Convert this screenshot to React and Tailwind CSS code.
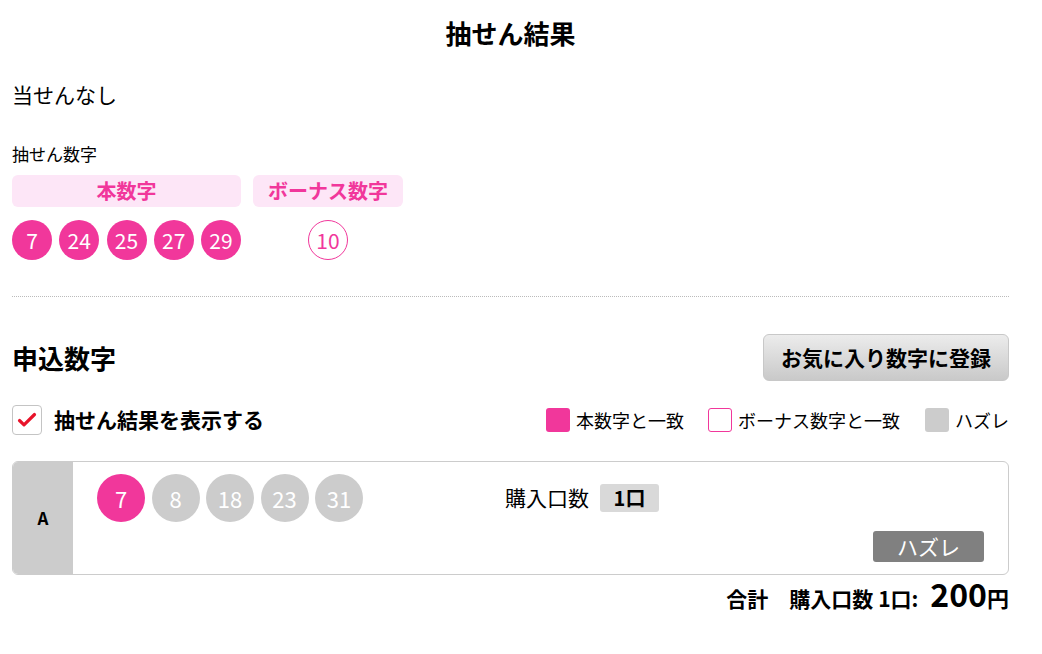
import React from 'react';

const mainNumbers = [7, 24, 25, 27, 29];
const bonusNumber = 10;
const entries = [{ label: 'A', numbers: [7, 8, 18, 23, 31], count: '1口', result: 'ハズレ' }];

function Ball({ n }) {
  return (
    <div className="flex h-10 w-10 items-center justify-center rounded-full bg-[#f1379b] text-[21px] leading-none text-white">
      {n}
    </div>
  );
}

function EntryBall({ n, hit }) {
  return (
    <div
      className={
        'flex h-12 w-12 items-center justify-center rounded-full text-[22px] leading-none text-white ' +
        (hit ? 'bg-[#f1379b]' : 'bg-[#cccccc]')
      }
    >
      {n}
    </div>
  );
}

export default function App() {
  return (
    <div
      className="min-h-screen bg-white text-black"
      style={{ fontFamily: '"Noto Sans CJK JP", "Noto Sans", sans-serif' }}
    >
      <div className="ml-3 w-[997px]">
        {/* 抽せん結果 */}
        <h1 className="flex h-[64px] items-center justify-center text-[26px] font-bold">抽せん結果</h1>
        <p className="mt-[16px] text-[21px] leading-[28px]">当せんなし</p>

        <p className="mt-[34px] text-[17px] leading-[24px]">抽せん数字</p>
        <div className="mt-[9px] flex gap-3">
          <div className="w-[229px]">
            <div className="flex h-8 items-center justify-center rounded-md bg-[#fde6f7] text-[20px] font-bold text-[#f1379b]">
              本数字
            </div>
            <div className="mt-[13px] flex justify-between">
              {mainNumbers.map((n) => (
                <Ball key={n} n={n} />
              ))}
            </div>
          </div>
          <div className="w-[150px]">
            <div className="flex h-8 items-center justify-center rounded-md bg-[#fde6f7] text-[20px] font-bold text-[#f1379b]">
              ボーナス数字
            </div>
            <div className="mt-[13px] flex justify-center">
              <div className="flex h-10 w-10 items-center justify-center rounded-full border border-[#f1379b] text-[21px] leading-none text-[#f1379b]">
                {bonusNumber}
              </div>
            </div>
          </div>
        </div>

        <div className="mt-[36px] border-t border-dotted border-[#bbbbbb]" />

        {/* 申込数字 */}
        <div className="mt-[37px] flex items-center justify-between">
          <h2 className="text-[26px] font-bold leading-[32px]">申込数字</h2>
          <button className="h-[47px] w-[246px] rounded-md border border-[#c8c8c8] bg-gradient-to-b from-[#ececec] to-[#c9c9c9] text-[21px] font-bold">
            お気に入り数字に登録
          </button>
        </div>

        <div className="mt-[24px] flex h-[30px] items-center justify-between">
          <label className="flex items-center gap-3">
            <span className="flex h-[30px] w-[30px] items-center justify-center rounded-[4px] border border-[#c4c4c4] bg-white">
              <svg width="20" height="16" viewBox="0 0 20 16" fill="none">
                <path d="M2.5 8.5l4.5 4.3L17.5 2.5" stroke="#e8132a" strokeWidth="3.2" strokeLinecap="round" strokeLinejoin="round" />
              </svg>
            </span>
            <span className="text-[21px] font-bold">抽せん結果を表示する</span>
          </label>
          <div className="flex items-center text-[18px]">
            <span className="h-6 w-6 rounded-[3px] bg-[#f1379b]" />
            <span className="ml-[6px]">本数字と一致</span>
            <span className="ml-[24px] h-6 w-6 rounded-[3px] border border-[#f1379b] bg-white" />
            <span className="ml-[6px]">ボーナス数字と一致</span>
            <span className="ml-[25px] h-6 w-6 rounded-[3px] bg-[#cccccc]" />
            <span className="ml-[6px]">ハズレ</span>
          </div>
        </div>

        {entries.map((e) => (
          <div key={e.label} className="mt-[26px] flex h-[114px] overflow-hidden rounded-md border border-[#cccccc]">
            <div className="flex w-[60px] items-center justify-center bg-[#cccccc] text-[17px] font-bold">
              {e.label}
            </div>
            <div className="flex flex-1">
              <div className="ml-[24px] mt-[12px] flex gap-[6.5px]">
                {e.numbers.map((n, i) => (
                  <EntryBall key={n} n={n} hit={i === 0} />
                ))}
              </div>
              <div className="ml-[142px] flex flex-1 flex-col pr-6">
                <div className="mt-[22px] flex h-7 items-center">
                  <span className="text-[21px]">購入口数</span>
                  <span className="ml-[11px] flex h-7 w-[59px] items-center justify-center rounded-[3px] bg-[#d9d9d9] text-[20px] font-bold">
                    {e.count}
                  </span>
                </div>
                <div className="mt-[19px] flex justify-end">
                  <span className="flex h-[31px] w-[111px] items-center justify-center rounded-[3px] bg-[#808080] text-[21px] text-white">
                    {e.result}
                  </span>
                </div>
              </div>
            </div>
          </div>
        ))}

        <div className="flex h-9 items-baseline justify-end font-bold">
          <span className="text-[21px]">合計</span>
          <span className="ml-[21px] text-[21px]">購入口数 1口:</span>
          <span className="ml-[12px] text-[32px] leading-[36px]">200</span>
          <span className="text-[22px]">円</span>
        </div>
      </div>
    </div>
  );
}
